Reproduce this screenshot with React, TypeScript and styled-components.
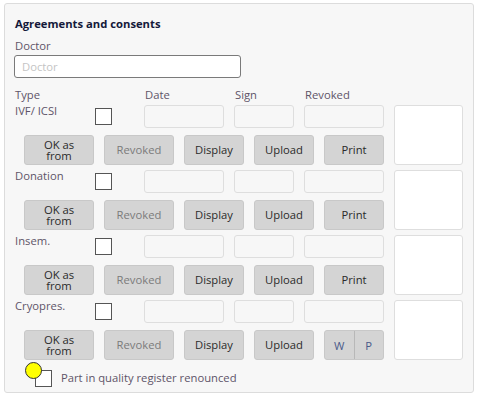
import React from "react";
import styled, { createGlobalStyle } from "styled-components";

const GlobalStyle = createGlobalStyle`
  body {
    margin: 0;
    background: #ffffff;
    font-family: "Open Sans", "Noto Sans", sans-serif;
    font-size: 11.25px;
  }
`;

const consents = [
  { name: "IVF/ ICSI", split: false },
  { name: "Donation", split: false },
  { name: "Insem.", split: false },
  { name: "Cryopres.", split: true },
];

const App = () => {
  return (
    <>
      <GlobalStyle />
      <Panel>
        <Title>Agreements and consents</Title>
        <Label>Doctor</Label>
        <DoctorInput placeholder="Doctor" />
        <HeaderRow>
          <HeadCell $width={130}>Type</HeadCell>
          <HeadCell $width={90}>Date</HeadCell>
          <HeadCell $width={70}>Sign</HeadCell>
          <HeadCell $width={80}>Revoked</HeadCell>
        </HeaderRow>
        {consents.map((c) => (
          <Block key={c.name}>
            <Left>
              <TopLine>
                <RowLabel>{c.name}</RowLabel>
                <Check />
                <Field $width={80} />
                <Field $width={60} />
                <Field $width={80} />
              </TopLine>
              <ButtonRow>
                <Button $width={70} $twoLine>
                  OK as
                  <br />
                  from
                </Button>
                <Button $width={70} $disabled>
                  Revoked
                </Button>
                <Button $width={60}>Display</Button>
                <Button $width={60}>Upload</Button>
                {c.split ? (
                  <Split>
                    <SplitPart>W</SplitPart>
                    <SplitPart $divider>P</SplitPart>
                  </Split>
                ) : (
                  <Button $width={60}>Print</Button>
                )}
              </ButtonRow>
            </Left>
            <BigBox />
          </Block>
        ))}
        <Footer>
          <Marker />
          <FooterCheck />
          <FooterText>Part in quality register renounced</FooterText>
        </Footer>
      </Panel>
    </>
  );
};

export default App;

const Panel = styled.div`
  box-sizing: border-box;
  margin: 3px 0 0 4px;
  width: 470px;
  height: 390px;
  border: 1px solid #dcdcdc;
  border-radius: 3px;
  background: #f7f7f7;
  padding: 12px 10px 0 10px;
  display: flex;
  flex-direction: column;
`;

const Title = styled.div`
  font-weight: 700;
  color: #14193a;
  line-height: 16px;
`;

const Label = styled.div`
  color: #5e5468;
  line-height: 16px;
  margin-top: 6px;
`;

const DoctorInput = styled.input`
  box-sizing: border-box;
  width: 227px;
  height: 23px;
  margin: 1px 0 0 -1px;
  border: 1px solid #7a7a7a;
  border-radius: 3px;
  background: #fff;
  padding: 0 7px;
  font: inherit;
  color: #333;
  outline: none;
  &::placeholder {
    color: #c4c4c4;
  }
`;

const HeaderRow = styled.div`
  display: flex;
  margin-top: 9px;
  line-height: 16px;
  color: #5e5468;
`;

const HeadCell = styled.div<{ $width: number }>`
  width: ${(p) => p.$width}px;
`;

const Block = styled.div`
  display: flex;
  gap: 10px;
  margin-top: 2px;
  margin-bottom: 3px;
`;

const Left = styled.div`
  display: flex;
  flex-direction: column;
  width: 369px;
`;

const TopLine = styled.div`
  display: flex;
  align-items: flex-start;
  gap: 10px;
  height: 23px;
`;

const RowLabel = styled.div`
  width: 70px;
  color: #5e5468;
  line-height: 16px;
  margin-top: -2px;
`;

const Check = styled.div`
  box-sizing: border-box;
  width: 17px;
  height: 17px;
  margin-top: 3px;
  border: 1px solid #555;
  background: #fff;
  margin-right: 22px;
`;

const Field = styled.div<{ $width: number }>`
  box-sizing: border-box;
  width: ${(p) => p.$width}px;
  height: 23px;
  border: 1px solid #dedede;
  border-radius: 3px;
  background: #f7f7f7;
`;

const ButtonRow = styled.div`
  display: flex;
  gap: 10px;
  margin-top: 7px;
  padding-left: 9px;
`;

const Button = styled.div<{ $width: number; $disabled?: boolean; $twoLine?: boolean }>`
  box-sizing: border-box;
  width: ${(p) => p.$width}px;
  height: 30px;
  display: flex;
  align-items: center;
  justify-content: center;
  text-align: center;
  background: #d4d4d4;
  border: 1px solid #c8c8c8;
  border-radius: 3px;
  color: ${(p) => (p.$disabled ? "#7b7b7b" : "#2a2a2a")};
  line-height: ${(p) => (p.$twoLine ? "11px" : "16px")};
`;

const Split = styled.div`
  box-sizing: border-box;
  display: flex;
  width: 60px;
  height: 30px;
  background: #d4d4d4;
  border: 1px solid #c8c8c8;
  border-radius: 3px;
`;

const SplitPart = styled.div<{ $divider?: boolean }>`
  flex: 1;
  display: flex;
  align-items: center;
  justify-content: center;
  color: #4a5a8a;
  border-left: ${(p) => (p.$divider ? "1px solid #b8b8b8" : "none")};
`;

const BigBox = styled.div`
  box-sizing: border-box;
  width: 70px;
  height: 60px;
  border: 1px solid #dedede;
  border-radius: 3px;
  background: #fff;
`;

const Footer = styled.div`
  position: relative;
  display: flex;
  align-items: center;
  margin-top: 3px;
  padding-left: 20px;
  height: 20px;
`;

const Marker = styled.div`
  position: absolute;
  left: 10px;
  top: -4px;
  width: 17px;
  height: 17px;
  border-radius: 50%;
  background: #ffff00;
  border: 1px solid #333;
  box-sizing: border-box;
  z-index: 1;
`;

const FooterCheck = styled.div`
  box-sizing: border-box;
  width: 17px;
  height: 17px;
  border: 1px solid #555;
  background: #fff;
  margin-top: 4px;
`;

const FooterText = styled.div`
  margin-left: 9px;
  color: #5e5468;
  margin-top: 2px;
`;
